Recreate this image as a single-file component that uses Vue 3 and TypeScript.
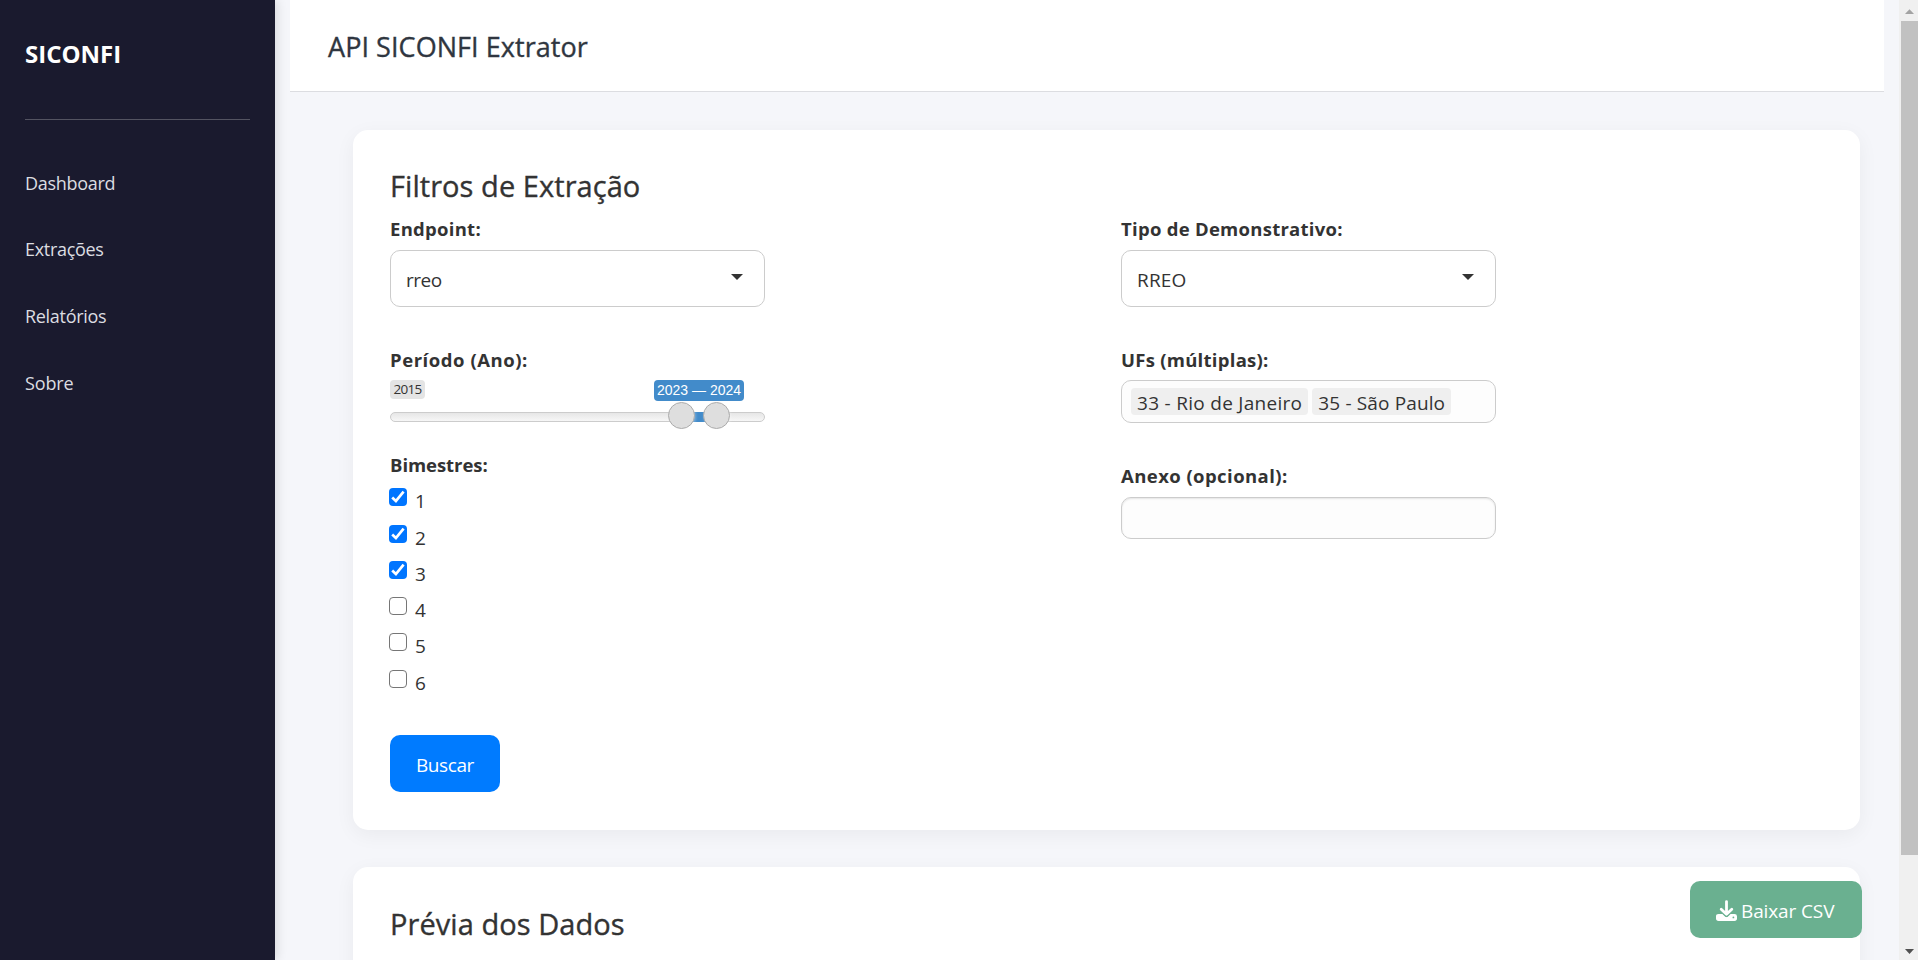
<script setup lang="ts">
import { ref } from 'vue'

const menu = [
  { label: 'Dashboard', cls: 'm-dash' },
  { label: 'Extrações', cls: 'm-ext' },
  { label: 'Relatórios', cls: 'm-rel' },
  { label: 'Sobre', cls: 'm-sob' },
]
const ufs = ['33 - Rio de Janeiro', '35 - São Paulo']
const bimestres = ref([
  { n: 1, on: true },
  { n: 2, on: true },
  { n: 3, on: true },
  { n: 4, on: false },
  { n: 5, on: false },
  { n: 6, on: false },
])
const range = { from: 2023, to: 2024, min: 2015 }
</script>

<template>
  <div class="page">
    <aside class="sidebar">
      <div class="brand"><span>SICONFI</span></div>
      <nav>
        <a v-for="m in menu" :key="m.label" :class="m.cls">{{ m.label }}</a>
      </nav>
    </aside>

    <main class="main">
      <header class="topbar"><h1>API SICONFI Extrator</h1></header>

      <section class="card filters">
        <h2>Filtros de Extração</h2>
        <div class="cols">
          <div class="col">
            <label class="lbl">Endpoint:</label>
            <div class="select">
              <span class="low">rreo</span>
              <i class="caret"></i>
            </div>
            <label class="lbl l-per">Período (Ano):</label>
            <div class="slider">
              <span class="min">{{ range.min }}</span>
              <span class="val">{{ range.from }} — {{ range.to }}</span>
              <div class="track"></div>
              <div class="bar"></div>
              <i class="knob k1"></i>
              <i class="knob k2"></i>
            </div>
            <label class="lbl l-bim">Bimestres:</label>
            <div class="checks">
              <div v-for="b in bimestres" :key="b.n" class="check" @click="b.on = !b.on">
                <span class="box" :class="{ on: b.on }">
                  <svg v-if="b.on" viewBox="0 0 18 18" width="18" height="18">
                    <path d="M3.2 9.6 L6.9 13 L14.6 3.6" fill="none" stroke="#fff" stroke-width="2.7" />
                  </svg>
                </span>
                <span class="num">{{ b.n }}</span>
              </div>
            </div>
            <button class="buscar"><span>Buscar</span></button>
          </div>

          <div class="col">
            <label class="lbl">Tipo de Demonstrativo:</label>
            <div class="select">
              <span class="up">RREO</span>
              <i class="caret"></i>
            </div>
            <label class="lbl">UFs (múltiplas):</label>
            <div class="multi">
              <span v-for="u in ufs" :key="u" class="tag">{{ u }}</span>
            </div>
            <label class="lbl l-ane">Anexo (opcional):</label>
            <div class="input"></div>
          </div>
        </div>
      </section>

      <section class="card preview">
        <h2>Prévia dos Dados</h2>
      </section>
    </main>

    <button class="download">
      <svg viewBox="0 0 21 21" width="21" height="21">
        <path d="M10.5 1.6V14 M5.2 9.2L10.5 14.3L15.8 9.2" fill="none" stroke="#fff" stroke-width="2.8" stroke-linecap="round" stroke-linejoin="round" />
        <path d="M2.6 14H6.4L9 16.5Q10.5 17.7 12 16.5L14.6 14H18.4Q21 14 21 16.3V18.6Q21 21 18.4 21H2.6Q0 21 0 18.6V16.3Q0 14 2.6 14Z" fill="#fff" />
        <path d="M6.6 13.6L9.2 16.1Q10.5 17.1 11.8 16.1L14.4 13.6" fill="none" stroke="#6ab090" stroke-width="0.7" />
        <circle cx="17.4" cy="17.4" r="0.9" fill="#6ab090" />
      </svg>
      <span>Baixar CSV</span>
    </button>

    <div class="scrollbar">
      <svg class="arrow" viewBox="0 0 17 21" width="17" height="21"><path d="M4 14L8.5 9.2L13 14Z" fill="#a3a3a3" /></svg>
      <div class="thumb"></div>
      <svg class="arrow down" viewBox="0 0 17 21" width="17" height="21"><path d="M4 10L8.5 15L13 10Z" fill="#505050" /></svg>
    </div>
  </div>
</template>

<style>
body {
  margin: 0;
  overflow: hidden;
}
</style>

<style scoped>
* {
  box-sizing: border-box;
}
.page {
  display: flex;
  position: relative;
  width: 1918px;
  height: 960px;
  overflow: hidden;
  background: #f5f6fa;
  color: #333;
  font-family: "Open Sans", "Noto Sans", sans-serif;
  font-size: 19px;
}
.sidebar {
  flex: none;
  width: 275px;
  height: 960px;
  padding: 0 25px;
  background: #1a1a2e;
  box-shadow: 2px 0 10px rgba(0, 0, 0, 0.12);
}
.brand {
  height: 120px;
  padding-top: 37px;
  border-bottom: 1px solid #535361;
  color: #fff;
  font-size: 24px;
  font-weight: 700;
  line-height: 34px;
}
nav {
  display: flex;
  flex-direction: column;
  padding-top: 50px;
}
nav a {
  height: 67px;
  line-height: 26px;
  font-size: 18px;
  letter-spacing: -0.3px;
  color: #dcdde1;
}
.m-dash {
  height: 66px;
}
.m-sob {
  letter-spacing: -0.15px;
}
.main {
  flex: none;
  width: 1624px;
  padding: 0 15px;
}
.topbar {
  height: 92px;
  padding: 28px 38px 0;
  background: #fff;
  border-bottom: 1px solid #dcdde1;
}
h1,
h2 {
  margin: 0;
  font-weight: 500;
  letter-spacing: 0.06px;
  -webkit-text-stroke: 0.35px currentColor;
}
h1 {
  font-size: 27px;
  line-height: 37px;
  color: #2f3640;
}
h2 {
  font-size: 29px;
  line-height: 40px;
}
.card {
  width: 1507px;
  margin-left: 63px;
  padding: 36px 37px 0;
  background: #fff;
  border-radius: 15px;
  box-shadow: 0 5px 20px rgba(0, 0, 0, 0.05);
}
.filters {
  height: 700px;
  margin-top: 38px;
}
.preview {
  height: 200px;
  margin-top: 37px;
  padding-top: 37px;
}
.cols {
  display: flex;
  gap: 356px;
  padding-top: 11px;
}
.col {
  width: 375px;
  flex: none;
}
.lbl {
  display: block;
  height: 24px;
  line-height: 24px;
  font-size: 18.5px;
  font-weight: 700;
  letter-spacing: 0.27px;
  white-space: nowrap;
}
.l-per {
  letter-spacing: 0.55px;
}
.l-bim {
  letter-spacing: -0.05px;
}
.l-ane {
  letter-spacing: 0.43px;
}
.select {
  display: flex;
  justify-content: space-between;
  height: 57px;
  margin: 9px 0 41px;
  padding: 1px 21px 0 15px;
  border: 1px solid #ccc;
  border-radius: 10px;
  line-height: 57px;
  background: #fff;
}
.low {
  letter-spacing: -0.5px;
}
.up {
  letter-spacing: 0.2px;
}
.caret {
  margin-top: 22px;
  width: 12px;
  height: 6px;
  background: #333;
  clip-path: polygon(0 0, 100% 0, 50% 100%);
}
.slider {
  position: relative;
  height: 73px;
  margin-top: 8px;
}
.min,
.val {
  position: absolute;
  top: 0;
  left: 0;
  width: 35px;
  height: 19px;
  border-radius: 4px;
  background: #e4e4e4;
  font-size: 13.5px;
  letter-spacing: -0.7px;
  line-height: 19px;
  text-align: center;
  white-space: nowrap;
}
.val {
  left: 264px;
  width: 90px;
  height: 21px;
  line-height: 21px;
  background: #428bca;
  color: #fff;
  font-family: "Liberation Sans", Arial, sans-serif;
  font-size: 14px;
  letter-spacing: 0;
}
.track {
  position: absolute;
  top: 32px;
  left: 0;
  width: 375px;
  height: 10px;
  border: 1px solid #ccc;
  border-radius: 8px;
  background: linear-gradient(#dedede -50%, #fff 150%);
}
.bar {
  position: absolute;
  top: 32px;
  left: 292px;
  width: 34px;
  height: 10px;
  background: #428bca;
}
.knob {
  position: absolute;
  top: 22px;
  width: 27px;
  height: 27px;
  border: 1px solid #ababab;
  border-radius: 50%;
  background: #dedede;
  box-shadow: 1px 1px 3px rgba(255, 255, 255, 0.3);
}
.k1 {
  left: 278px;
}
.k2 {
  left: 313px;
}
.checks {
  padding-top: 11px;
  margin-left: -1.5px;
  height: 258px;
}
.check {
  display: flex;
  height: 36px;
}
.check:first-child,
.check:nth-child(5) {
  height: 37px;
}
.box {
  flex: none;
  width: 18px;
  height: 18px;
  border: 1.5px solid #767676;
  border-radius: 4px;
}
.box.on {
  border: 0;
  background: #0075ff;
}
.box svg {
  display: block;
}
.num {
  margin: 1px 0 0 8.5px;
  line-height: 24px;
}
button {
  display: flex;
  border: 0;
  padding: 0;
  color: #fff;
  font: inherit;
  border-radius: 10px;
  height: 57px;
  line-height: 60px;
}
.buscar {
  width: 110px;
  justify-content: center;
  background: #007bff;
  letter-spacing: -0.4px;
}
.multi {
  display: flex;
  gap: 4px;
  height: 43px;
  margin: 8px 0 41px;
  padding: 7px 9px;
  border: 1px solid #ccc;
  border-radius: 10px;
  background: #fdfdfd;
}
.tag {
  height: 27px;
  padding: 0 6px;
  line-height: 31px;
  letter-spacing: 0.29px;
  border-radius: 4px;
  background: #efefef;
  white-space: nowrap;
}
.tag + .tag {
  letter-spacing: 0.14px;
}
.input {
  height: 42px;
  margin-top: 9px;
  border: 1px solid #ccc;
  border-radius: 10px;
  background: #fdfdfd;
  box-shadow: inset 0 1px 2px rgba(0, 0, 0, 0.1);
}
.download {
  position: absolute;
  left: 1690px;
  top: 881px;
  width: 172px;
  background: #6ab090;
  letter-spacing: -0.12px;
}
.download svg {
  flex: none;
  margin: 19px 4px 0 26px;
}
.download span {
  white-space: nowrap;
}
.scrollbar {
  display: flex;
  flex-direction: column;
  width: 19px;
  height: 960px;
  padding-left: 2px;
  background: #f0f0f0;
}
.arrow {
  display: block;
  flex: none;
}
.thumb {
  height: 834px;
  background: #c1c1c1;
}
.down {
  margin-top: auto;
}
</style>
